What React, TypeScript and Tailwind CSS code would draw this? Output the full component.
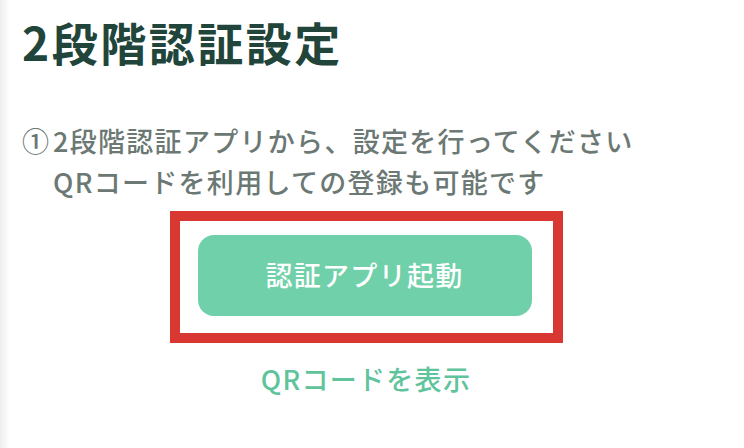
import React from "react";

export default function App() {
  const font = { fontFamily: '"Noto Sans CJK JP", "Noto Sans", sans-serif' };
  return (
    <div className="flex w-[744px] h-[448px] bg-white overflow-hidden" style={font}>
      <div className="w-[10px] h-full bg-gradient-to-r from-[#eeeeee] to-white shrink-0" />
      <div className="flex-1 pl-[12px] pr-[34px] flex flex-col">
        <h1 className="mt-[13px] text-[46px] leading-[56px] font-bold text-[#21453a] tracking-[2.5px]">
          2段階認証設定
        </h1>
        <div className="mt-[51px] text-[27px] leading-[41px] font-medium text-[#6b7873] tracking-[1.3px]">
          <div className="flex">
            <span className="w-[31px] shrink-0 tracking-normal">①</span>
            <span>2段階認証アプリから、設定を行ってください</span>
          </div>
          <div className="pl-[31px]">QRコードを利用しての登録も可能です</div>
        </div>
        <div className="mt-[9px] flex justify-center">
          <div className="border-[10px] border-[#d93832] pl-[18px] pr-[21px] pt-[14px] pb-[17px]">
            <button className="w-[334px] h-[81px] rounded-[16px] bg-[#6fd0aa] text-white text-[27px] font-medium tracking-[1.3px]">
              認証アプリ起動
            </button>
          </div>
        </div>
        <div className="mt-[15px] flex justify-center">
          <span className="text-[27px] leading-[41px] font-medium text-[#5fc49c] tracking-[1.3px]">
            QRコードを表示
          </span>
        </div>
      </div>
    </div>
  );
}
